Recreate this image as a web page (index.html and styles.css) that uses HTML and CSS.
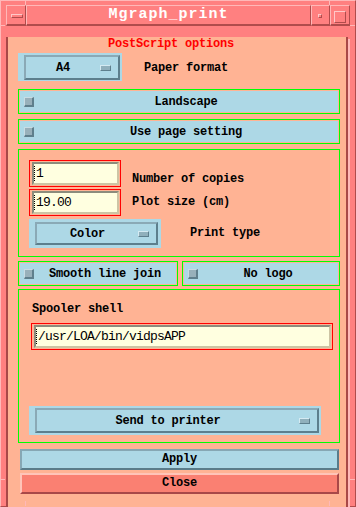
FILE: index.html
```html
<!DOCTYPE html>
<html lang="en">
<head>
    <meta charset="UTF-8">
    <meta name="viewport" content="width=device-width, initial-scale=1.0">
    <title>Mgraph_print</title>
    <link rel="stylesheet" href="styles.css">
</head>
<body>
    <div class="window">
        <span class="notch v top-l"></span>
        <span class="notch v top-r"></span>
        <span class="notch v bot-l"></span>
        <span class="notch v bot-r"></span>
        <span class="notch h left-t"></span>
        <span class="notch h right-t"></span>
        <span class="notch h left-b"></span>
        <span class="notch h right-b"></span>

        <div class="titlebar">
            <div class="tb-btn menu"><span class="bar"></span></div>
            <div class="title">Mgraph_print</div>
            <div class="tb-btn min"><span class="dot"></span></div>
            <div class="tb-btn max"><span class="box"></span></div>
        </div>

        <div class="client">
            <div class="heading">PostScript options</div>

            <div class="row paper">
                <div class="optmenu small">
                    <div class="optbtn"><span class="optlabel">A4</span><span class="ind"></span></div>
                </div>
                <span class="label paper-label">Paper format</span>
            </div>

            <div class="toggle first">
                <div class="toggle-face"><span class="check"></span><span class="tlabel">Landscape</span></div>
            </div>
            <div class="toggle">
                <div class="toggle-face"><span class="check"></span><span class="tlabel">Use page setting</span></div>
            </div>

            <div class="group options">
                <div class="row">
                    <div class="fieldbox short"><div class="field"><span class="cursor"></span>1</div></div>
                    <span class="label copies">Number of copies</span>
                </div>
                <div class="row second">
                    <div class="fieldbox short"><div class="field"><span class="cursor"></span>19.00</div></div>
                    <span class="label size">Plot size (cm)</span>
                </div>
                <div class="row third">
                    <div class="optmenu color">
                        <div class="optbtn"><span class="optlabel">Color</span><span class="ind"></span></div>
                    </div>
                    <span class="label ptype">Print type</span>
                </div>
            </div>

            <div class="toggle-row">
                <div class="toggle smooth">
                    <div class="toggle-face"><span class="check"></span><span class="tlabel">Smooth line join</span></div>
                </div>
                <div class="toggle nologo">
                    <div class="toggle-face"><span class="check"></span><span class="tlabel">No logo</span></div>
                </div>
            </div>

            <div class="group spooler">
                <div class="label spool-label">Spooler shell</div>
                <div class="fieldbox long"><div class="field"><span class="cursor"></span>/usr/LOA/bin/vidpsAPP</div></div>
                <div class="optmenu send">
                    <div class="optbtn"><span class="optlabel">Send to printer</span><span class="ind"></span></div>
                </div>
            </div>

            <button class="push apply">Apply</button>
            <button class="push close">Close</button>
        </div>
    </div>
</body>
</html>
```

FILE: styles.css
```css
*{
    box-sizing: border-box;
}
body{
    margin: 0;
    background-color: #ffffff;
    font-family: "Liberation Mono", "DejaVu Sans Mono", monospace;
    font-weight: bold;
    font-size: 12px;
    letter-spacing: -0.2px;
    color: #000000;
}

/* window frame */
.window{
    position: relative;
    width: 356px;
    height: 507px;
    background-color: #ff8080;
    border-top: 1px solid #ffb8b8;
    border-left: 1px solid #ffb8b8;
    border-bottom: 1px solid #b04c4c;
    border-right: 1px solid #b04c4c;
    padding: 4px 5px 6px 5px;
}
.notch{
    position: absolute;
    background-color: #ffb8b8;
}
.notch.v{
    width: 1px;
    height: 5px;
}
.notch.h{
    width: 5px;
    height: 1px;
}
.top-l{ left: 24px; top: -1px; }
.top-r{ left: 328px; top: -1px; }
.bot-l{ left: 24px; bottom: 0; height: 6px; }
.bot-r{ left: 328px; bottom: 0; height: 6px; }
.left-t{ left: -1px; top: 24px; }
.right-t{ right: 0; top: 24px; }
.left-b{ left: -1px; top: 478px; }
.right-b{ right: 0; top: 478px; }

.titlebar{
    display: flex;
    height: 21px;
}
.tb-btn, .title{
    border-top: 1px solid #ffb8b8;
    border-left: 1px solid #ffb8b8;
    border-bottom: 2px solid #b04c4c;
    border-right: 1px solid #b04c4c;
    background-color: #ff8080;
}
.tb-btn{
    position: relative;
}
.menu{
    width: 20px;
}
.min{
    width: 19px;
}
.max{
    width: 20px;
}
.title{
    flex: 1;
    color: #ffffff;
    font-size: 15px;
    letter-spacing: 1px;
    line-height: 18px;
    text-align: center;
}
.bar{
    position: absolute;
    left: 4px;
    top: 8px;
    width: 12px;
    height: 4px;
    border-top: 1px solid #ffc8c8;
    border-left: 1px solid #ffc8c8;
    border-bottom: 1px solid #b04c4c;
    border-right: 1px solid #b04c4c;
}
.dot{
    position: absolute;
    left: 6px;
    top: 8px;
    width: 4px;
    height: 4px;
    border-top: 1px solid #ffc8c8;
    border-left: 1px solid #ffc8c8;
    border-bottom: 1px solid #b04c4c;
    border-right: 1px solid #b04c4c;
}
.box{
    position: absolute;
    left: 3px;
    top: 5px;
    width: 12px;
    height: 12px;
    border-top: 1px solid #ffc8c8;
    border-left: 1px solid #ffc8c8;
    border-bottom: 1px solid #b04c4c;
    border-right: 1px solid #b04c4c;
}

/* client area */
.client{
    width: 342px;
    height: 474px;
    background-color: #ffb394;
    border-left: 2px solid #a84848;
    border-right: 2px solid #a84848;
    border-bottom: 2px solid #a84848;
    box-shadow: 2px 2px 0 #ffb8b8;
    padding: 0 6px 0 10px;
}
.heading{
    margin-top: 11px;
    line-height: 14px;
    color: #ff0000;
    text-align: center;
    padding-right: 16px;
}
.row{
    display: flex;
    align-items: flex-start;
}
.label{
    line-height: 14px;
    white-space: nowrap;
}
.paper{
    margin-top: 2px;
    height: 28px;
}
.paper-label{
    margin-left: 22px;
    margin-top: 8px;
}

/* option menus */
.optmenu{
    display: flex;
    background-color: #add8e6;
    padding: 2px 2px 1px 6px;
}
.optbtn{
    flex: 1;
    display: flex;
    align-items: center;
    background-color: #add8e6;
    border-top: 2px solid #8aa9b6;
    border-left: 2px solid #8aa9b6;
    border-bottom: 2px solid #5d7f8d;
    border-right: 2px solid #5d7f8d;
}
.optlabel{
    flex: 1;
    text-align: center;
    line-height: 14px;
}
.ind{
    width: 11px;
    height: 6px;
    margin-right: 7px;
    background-color: #90b0bc;
    border-top: 1px solid #d4eaf2;
    border-left: 1px solid #d4eaf2;
    border-bottom: 1px solid #5d7f8d;
    border-right: 1px solid #5d7f8d;
}
.small{
    width: 104px;
    height: 28px;
}
.color{
    width: 132px;
    height: 29px;
    padding: 3px 3px 3px 6px;
}
.send{
    width: 292px;
    height: 29px;
    margin-top: 56px;
    margin-left: 10px;
    padding: 2px 2px 2px 6px;
}

/* toggles */
.toggle{
    border: 1px solid #00ff00;
    padding: 1px;
    height: 25px;
    margin-top: 5px;
}
.toggle.first{
    margin-top: 8px;
}
.toggle-face{
    display: flex;
    align-items: center;
    height: 21px;
    background-color: #add8e6;
}
.check{
    width: 10px;
    height: 10px;
    margin-left: 4px;
    background-color: #98b0ba;
    border-top: 1px solid #c8dce4;
    border-left: 1px solid #c8dce4;
    border-bottom: 2px solid #5f7f8c;
    border-right: 2px solid #5f7f8c;
}
.tlabel{
    flex: 1;
    text-align: center;
    line-height: 14px;
}
.toggle-row{
    display: flex;
    gap: 4px;
    margin-top: 4px;
}
.toggle-row .toggle{
    margin-top: 0;
}
.smooth{
    width: 160px;
}
.nologo{
    flex: 1;
}

/* groups */
.group{
    border: 1px solid #00ff00;
    margin-top: 5px;
}
.options{
    height: 108px;
    padding: 10px 0 0 10px;
}
.second{
    margin-top: 2px;
}
.third{
    margin-top: 3px;
}
.copies{
    margin-left: 11px;
    margin-top: 12px;
}
.size{
    margin-left: 11px;
    margin-top: 6px;
}
.ptype{
    margin-left: 29px;
    margin-top: 7px;
}
.spooler{
    height: 154px;
    margin-top: 3px;
}
.spool-label{
    margin-top: 12px;
    margin-left: 13px;
}

/* text fields */
.fieldbox{
    border: 1px solid #ff0000;
    padding: 1px 1px 1px 2px;
    height: 27px;
}
.short{
    width: 92px;
}
.long{
    width: 302px;
    margin-top: 7px;
    margin-left: 12px;
}
.field{
    display: flex;
    align-items: center;
    height: 100%;
    background-color: #ffffe0;
    border-top: 2px solid #8c8c7c;
    border-left: 2px solid #8c8c7c;
    border-bottom: 2px solid #cdc4a4;
    border-right: 2px solid #cdc4a4;
    font-weight: normal;
    font-size: 13px;
    letter-spacing: -0.8px;
    white-space: nowrap;
    overflow: hidden;
}
.cursor{
    width: 1px;
    height: 15px;
    margin-right: 1px;
    border-left: 1px dotted #000000;
}

/* push buttons */
.push{
    display: block;
    width: 319px;
    height: 21px;
    margin-left: 2px;
    padding: 0;
    font-family: "Liberation Mono", "DejaVu Sans Mono", monospace;
    font-weight: bold;
    font-size: 12px;
    letter-spacing: -0.2px;
    color: #000000;
    line-height: 17px;
    text-align: center;
}
.apply{
    margin-top: 6px;
    background-color: #add8e6;
    border-top: 2px solid #86a7b4;
    border-left: 2px solid #86a7b4;
    border-bottom: 2px solid #5a7c8a;
    border-right: 2px solid #5a7c8a;
}
.close{
    margin-top: 3px;
    background-color: #fa8072;
    border-top: 2px solid #ffc4b8;
    border-left: 2px solid #ffc4b8;
    border-bottom: 2px solid #a84848;
    border-right: 2px solid #a84848;
}
```
